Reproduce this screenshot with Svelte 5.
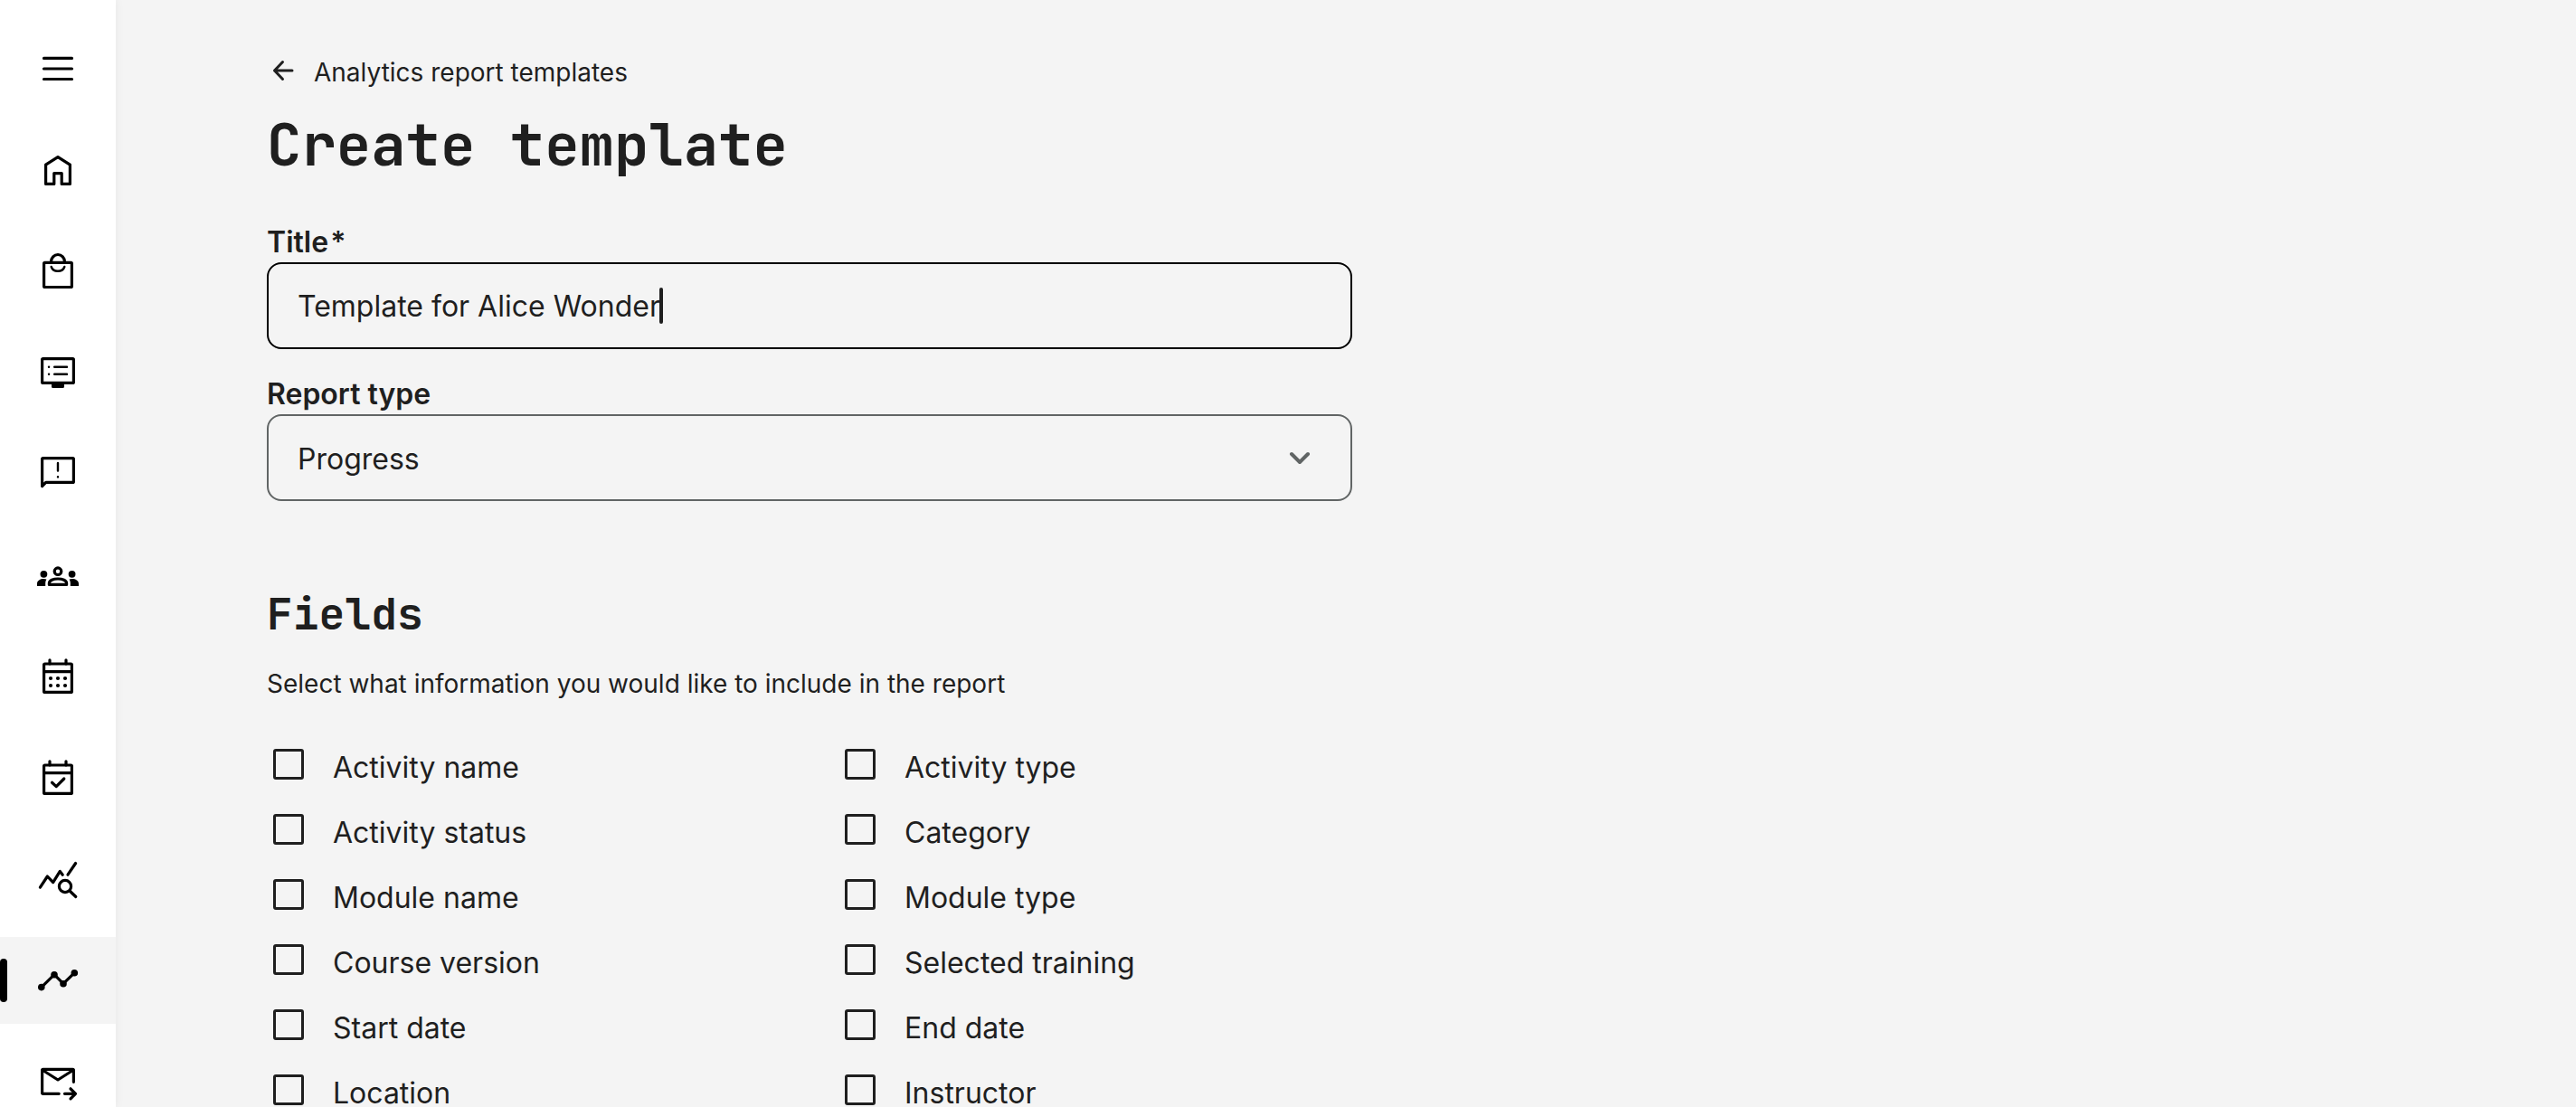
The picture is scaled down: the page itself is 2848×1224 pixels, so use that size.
<script lang="ts">
  let title = $state('Template for Alice Wonder');
  let reportType = $state('Progress');

  const menu = [
    { id: 'menu', label: 'Menu' },
    { id: 'home', label: 'Home' },
    { id: 'shop', label: 'Shop' },
    { id: 'courses', label: 'Courses' },
    { id: 'feedback', label: 'Feedback' },
    { id: 'groups', label: 'Groups' },
    { id: 'calendar', label: 'Calendar' },
    { id: 'bookings', label: 'Bookings' },
    { id: 'insights', label: 'Insights' },
    { id: 'analytics', label: 'Analytics' },
    { id: 'mail', label: 'Outgoing mail' }
  ];
  const active = 'analytics';

  const fields = [
    'Activity name', 'Activity type',
    'Activity status', 'Category',
    'Module name', 'Module type',
    'Course version', 'Selected training',
    'Start date', 'End date',
    'Location', 'Instructor'
  ];
</script>

<div class="shell">
  <nav class="sidebar" aria-label="Main">
    {#each menu as item (item.id)}
      <button class="nav-item" class:active={item.id === active} type="button" aria-label={item.label}>
        <svg class="nav-icon" viewBox="0 0 48 48" aria-hidden="true">
          {#if item.id === 'menu'}
            <path d="M8.5 12.4h31M8.5 24h31M8.5 35.5h31" />
          {:else if item.id === 'home'}
            <path d="M10.6 39.4V18.2L24 9.6l13.4 8.6v21.2h-9.2V27.6h-8.4v11.8z" />
          {:else if item.id === 'shop'}
            <rect x="8.6" y="14.3" width="30.8" height="27.2" rx="1" />
            <path d="M16.5 13.5a7.5 8 0 0 1 15 0" />
            <path class="thin" d="M16.7 19a7.6 6.6 0 0 0 14.6 0" />
          {:else if item.id === 'courses'}
            <rect x="6.6" y="8.6" width="34.8" height="26.8" rx="1" />
            <path class="solid" d="M17 36h14v3.4q0 1.6-1.6 1.6H18.6q-1.6 0-1.6-1.6z" />
            <path class="thin" d="M20.2 17.7h13.8M20.2 25.7h13.8M14 17.7h.1M14 25.7h.1" />
          {:else if item.id === 'feedback'}
            <path d="M6.6 37.5V7.600q0-1 1-1h32.800q1 0 1 1v24.800q0 1-1 1H10.700z" />
            <path class="thin" d="M24 12v8.500M24 27.300v.1" />
          {:else if item.id === 'groups'}
            <circle cx="24" cy="19.7" r="3.8" />
            <path d="M14.4 34.4v-1.6c0-3 4.5-4.8 9.6-4.8s9.6 1.8 9.6 4.8v1.6z" />
            <g class="solid">
              <circle cx="8.4" cy="22.8" r="3.9" />
              <circle cx="39.6" cy="22.8" r="3.9" />
              <path d="M1 36v-2.600C1 30 4.500 28 8.400 28q1.500 0 3 .4Q10.200 30.200 10.200 32.500V36z" />
              <path d="M47 36v-2.600C47 30 43.500 28 39.600 28q-1.500 0-3 .4 1.200 1.800 1.200 4.100V36z" />
            </g>
          {:else if item.id === 'calendar' || item.id === 'bookings'}
            <rect x="8.6" y="10" width="30.8" height="31.4" rx="1" />
            <path d="M8.6 18.7h30.8M15 5.8V10M33 5.800V10" />
            {#if item.id === 'calendar'}
              <g class="solid">
                {#each [16, 24, 32] as x}
                  <circle cx={x} cy="26" r="2.1" />
                  <circle cx={x} cy="34" r="2.1" />
                {/each}
              </g>
            {:else}
              <path d="m17.5 29.3 4.7 4.3 8.6-8.6" />
            {/if}
          {:else if item.id === 'insights'}
            <path d="m4.4 33.2 8-12.2 6.3 6.6 7.6-12.2 2.900 3.800M43.600 6.500 35 19.200" />
            <circle cx="32" cy="32" r="6.6" />
            <path d="m37 37 6.8 6.5" />
          {:else if item.id === 'analytics'}
            <path d="M5.8 31.6 20 17.7l10 10 12.3-12" />
            <g class="solid">
              <circle cx="5.8" cy="31.6" r="3.8" />
              <circle cx="20" cy="17.7" r="3.8" />
              <circle cx="30" cy="27.7" r="3.8" />
              <circle cx="42.3" cy="15.7" r="3.8" />
            </g>
          {:else}
            <path d="M25.2 37.3H7.6q-1 0-1-1v-25q0-1 1-1h32.800q1 0 1 1v13M7.500 11.500 24 22l16.500-10.500M31.500 37.300h12M38 31.800l5.500 5.500-5.500 5.500" />
          {/if}
        </svg>
      </button>
    {/each}
  </nav>

  <main class="content">
    <a class="back" href="#templates">
      <svg class="back-icon" viewBox="0 0 40 40" aria-hidden="true">
        <path d="M28 18H8.500M17.500 8.500 8.500 18l9 9.500" />
      </svg>
      Analytics report templates
    </a>
    <h1>Create template</h1>

    <form class="form" onsubmit={(e) => e.preventDefault()}>
      <div class="group">
        <label class="label" for="title">Title<span class="required">*</span></label>
        <div class="control">
          <input class="box focused" id="title" type="text" required bind:value={title} />
          <span class="caret-line" aria-hidden="true"><span class="ghost">{title}</span><span class="caret"></span></span>
        </div>
      </div>

      <div class="group">
        <label class="label" for="report-type">Report type</label>
        <div class="control">
          <select class="box select" id="report-type" bind:value={reportType}>
            <option>Progress</option>
            <option>Attendance</option>
          </select>
          <svg class="chevron" viewBox="0 0 24 24" aria-hidden="true"><path d="m3 8 9 9 9-9" /></svg>
        </div>
      </div>

      <h2>Fields</h2>
      <p class="hint">Select what information you would like to include in the report</p>

      <div class="fields">
        {#each fields as field}
          <label class="field"><input class="tick" type="checkbox" /><span>{field}</span></label>
        {/each}
      </div>
    </form>
  </main>
</div>

<style>
  :global(body) {
    margin: 0;
    background: #f4f4f4;
  }

  .shell {
    display: flex;
    height: 100vh;
    overflow: hidden;
    color: #1f1f1f;
    font-family: Inter, 'Liberation Sans', sans-serif;
    font-size: 32px;
    line-height: 48px;
  }

  .sidebar {
    display: flex;
    flex: none;
    flex-direction: column;
    gap: 16px;
    box-sizing: border-box;
    width: 128px;
    padding-top: 28px;
    overflow: hidden;
    background: #fff;
    box-shadow: 0 0 10px rgb(0 0 0 / 6%);
  }

  .nav-item {
    position: relative;
    display: flex;
    flex: none;
    align-items: center;
    justify-content: center;
    height: 96px;
    padding: 0;
    border: 0;
    background: none;
    color: #000;
  }

  .nav-item.active {
    background: #f4f4f4;
  }

  .nav-item.active::before {
    content: '';
    position: absolute;
    left: 0;
    width: 8px;
    height: 48px;
    border-radius: 4px;
    background: #000;
  }

  svg {
    fill: none;
    stroke: currentColor;
    stroke-linecap: round;
    stroke-linejoin: round;
  }

  .nav-icon {
    width: 48px;
    height: 48px;
    stroke-width: 3.2;
  }

  .thin {
    stroke-width: 2.4;
  }

  .solid {
    fill: currentColor;
    stroke: none;
  }

  .content {
    flex: 1;
    min-width: 0;
    padding: 60px 48px 0 167px;
    overflow: hidden;
  }

  .back {
    display: flex;
    align-items: center;
    gap: 12px;
    width: fit-content;
    color: inherit;
    font-size: 28px;
    line-height: 40px;
    text-decoration: none;
  }

  .back-icon {
    width: 40px;
    height: 40px;
    stroke-width: 3;
  }

  h1,
  h2 {
    margin: 0;
    font-family: 'JetBrains Mono', 'DejaVu Sans Mono', monospace;
    font-weight: 700;
  }

  h1 {
    margin: 20px 0 46px;
    font-size: 64px;
    line-height: 80px;
  }

  h2 {
    margin: 93px 0 24px;
    font-size: 48px;
    line-height: 64px;
  }

  .form {
    max-width: 1200px;
  }

  .group + .group {
    margin-top: 28px;
  }

  .label {
    display: block;
    font-weight: 600;
    line-height: 44px;
  }

  .required {
    margin-left: 2px;
  }

  .control {
    position: relative;
  }

  .box {
    display: block;
    box-sizing: border-box;
    width: 100%;
    height: 96px;
    padding: 0 32px;
    border: 2px solid #616565;
    border-radius: 16px;
    outline: none;
    appearance: none;
    background: transparent;
    color: inherit;
    font: inherit;
  }

  .focused {
    border-color: #000;
    caret-color: transparent;
  }

  .select {
    padding-top: 4px;
  }

  .caret-line {
    position: absolute;
    inset: 0 34px;
    display: flex;
    align-items: center;
    overflow: hidden;
    pointer-events: none;
  }

  .ghost {
    visibility: hidden;
    white-space: pre;
  }

  .caret {
    width: 4px;
    height: 40px;
    margin-left: -1px;
    border-radius: 2px;
    background: #1f1f1f;
  }

  .chevron {
    position: absolute;
    top: 36px;
    right: 46px;
    width: 24px;
    height: 24px;
    color: #616565;
    stroke-width: 4;
    pointer-events: none;
  }

  .hint {
    margin: 0 0 48px;
    font-size: 28px;
    line-height: 42px;
  }

  .fields {
    display: grid;
    grid-template-columns: 1fr 1fr;
    gap: 24px 64px;
  }

  .field {
    display: flex;
    gap: 32px;
    padding-left: 7px;
  }

  .tick {
    flex: none;
    box-sizing: border-box;
    width: 34px;
    height: 34px;
    margin: 3px 0 0;
    border: 3px solid #1f1f1f;
    border-radius: 3px;
    appearance: none;
  }

  .tick:checked {
    background: #1f1f1f;
  }
</style>
